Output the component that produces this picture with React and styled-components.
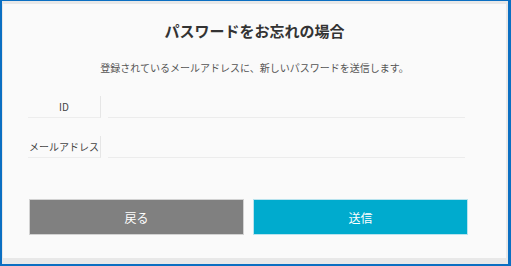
import React from "react"
import styled, { createGlobalStyle } from "styled-components"

const GlobalStyle = createGlobalStyle`
  html, body {
    margin: 0;
    padding: 0;
    background: #ffffff;
  }
  body {
    font-family: "Noto Sans CJK JP", "Noto Sans", sans-serif;
  }
`

const Frame = styled.div`
  box-sizing: border-box;
  width: 511px;
  height: 266px;
  border-style: solid;
  border-color: #0b6fc2;
  border-width: 1px 3px 2px 2px;
  background: #e8e8e8;
  padding: 3px 2px 6px 1px;
  display: flex;
`

const Panel = styled.div`
  flex: 1;
  background: #fafafa;
  display: flex;
  flex-direction: column;
  padding: 17px 41px 23px 25px;
`

const Title = styled.h1`
  margin: 0;
  font-size: 15px;
  line-height: 20px;
  font-weight: 700;
  color: #333333;
  text-align: center;
  padding-left: 16px;
`

const Lead = styled.p`
  margin: 19px 0 0;
  font-size: 10px;
  line-height: 16px;
  color: #555555;
  text-align: center;
  padding-left: 16px;
`

const Form = styled.div`
  margin-top: 20px;
  display: flex;
  flex-direction: column;
  gap: 18px;
`

const Row = styled.div`
  display: flex;
  gap: 7px;
  height: 22px;
`

const Label = styled.div`
  box-sizing: border-box;
  width: 73px;
  display: flex;
  align-items: center;
  justify-content: center;
  font-size: 10px;
  color: #444444;
  border-right: 1px solid #e6e6e6;
  border-bottom: 1px solid #ededed;
  white-space: nowrap;
`

const Input = styled.input`
  box-sizing: border-box;
  flex: 1;
  border: none;
  border-bottom: 1px solid #ececec;
  background: transparent;
  outline: none;
  font-family: inherit;
  font-size: 11px;
`

const Buttons = styled.div`
  margin-top: 41px;
  margin-left: 1px;
  margin-right: -3px;
  display: flex;
  gap: 9px;
`

const Button = styled.button`
  box-sizing: border-box;
  flex: 1;
  height: 36px;
  border: 1px solid ${(p) => (p.$primary ? "#b8e3ee" : "#d2d2d2")};
  background: ${(p) => (p.$primary ? "#00abce" : "#808080")};
  color: #ffffff;
  font-family: inherit;
  font-size: 12px;
  cursor: pointer;
`

export default function App() {
  return (
    <>
      <GlobalStyle />
      <Frame>
        <Panel>
          <Title>パスワードをお忘れの場合</Title>
          <Lead>登録されているメールアドレスに、新しいパスワードを送信します。</Lead>
          <Form>
            <Row>
              <Label>ID</Label>
              <Input type="text" />
            </Row>
            <Row>
              <Label>メールアドレス</Label>
              <Input type="email" />
            </Row>
          </Form>
          <Buttons>
            <Button>戻る</Button>
            <Button $primary>送信</Button>
          </Buttons>
        </Panel>
      </Frame>
    </>
  )
}
